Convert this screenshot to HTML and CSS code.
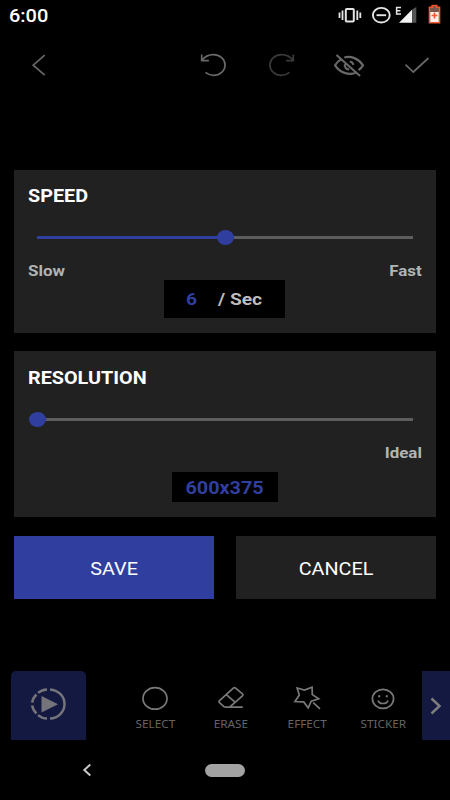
FILE: index.html
```html
<!DOCTYPE html>
<html lang="en">
<head>
<meta charset="utf-8">
<title>Export settings</title>
<link rel="stylesheet" href="styles.css">
</head>
<body>
<div class="screen">
  <header class="status">
    <span class="clock wide">6:00</span>
    <svg class="status-icons" width="110" height="32" viewBox="0 0 110 32" fill="none" stroke="#e4e4e4">
      <rect x="7.800" y="9" width="8" height="12.500" rx="1" stroke-width="2"/>
      <path d="M4.500 10.500v9.500M19.300 10.500v9.500" stroke-width="1.800"/>
      <path d="M1.500 12.500v5.500M22.300 12.500v5.500" stroke-width="1.800"/>
      <ellipse cx="43.300" cy="15.200" rx="8.400" ry="7.300" stroke-width="1.900"/>
      <path d="M38.500 15.200h9.600" stroke-width="1.900"/>
      <path d="M63 7.600h-4.400v6.300H63M58.600 10.800h3.800" stroke-width="1.500"/>
      <path d="M61 22.800 74.200 9.500v13.300z" fill="#f4f4f4" stroke="none"/>
      <path d="M74.200 9.500 78.300 7v15.800h-4.100z" fill="#555" stroke="none"/>
      <path d="M91.500 7.200h2.700V5.500h4.500v1.700h2.800v15.600h-10z" fill="#74584f" stroke="#f4572f" stroke-width="1.600"/>
      <path d="M92.300 12h8.400v10h-8.400z" fill="#fff0ea" stroke="none"/>
      <path d="M96.500 12.500v6M93.600 15.500h5.800" stroke="#f4572f" stroke-width="1.700"/>
    </svg>
  </header>

  <nav class="toolbar">
    <svg width="16" height="24" viewBox="0 0 16 24"><path d="M13.700 2.200 2.200 12.200l11.500 10"/></svg>
    <svg class="undo" width="30" height="28" viewBox="0 0 30 28"><path d="M2.700 3.500v6.200h7.200M2.900 9.500C5.500 5.700 9.500 3.600 14.300 3.600c6.600 0 11.800 4.700 11.800 10.400s-5.200 10.400-11.800 10.400c-3 0-5.600-1.200-7.800-3"/></svg>
    <svg class="redo" width="30" height="28" viewBox="0 0 30 28"><path d="M27.300 3.500v6.200h-7.200M27.100 9.500C24.500 5.700 20.500 3.600 15.700 3.600 9.100 3.600 3.900 8.300 3.900 14s5.200 10.400 11.800 10.400c3 0 5.600-1.200 7.800-3"/></svg>
    <svg class="eye" width="34" height="28" viewBox="0 0 34 28"><path d="M4.500 4 28 25M12.300 6.500c6.500-1.900 14.200 1 18.700 7.800-1.200 1.900-2.700 3.500-4.500 4.900M8.800 8.300c-2.300 1.500-4.200 3.500-5.700 6 5 7.600 13.500 10.200 20.400 7.400M17.800 10.500c1.900.3 3.300 1.600 3.500 3.300M12.900 13.300c-.7 2.900 1.400 5.100 4.300 5.200"/></svg>
    <svg class="check" width="28" height="22" viewBox="0 0 28 22"><path d="m2.500 10.700 7.800 7.300L25.500 4"/></svg>
  </nav>

  <main class="dialog">
    <section class="card speed">
      <h2><span class="wide">SPEED</span></h2>
      <div class="slider"><div class="fill half"></div><div class="knob"></div><div class="rest"></div></div>
      <div class="labels"><span class="wide">Slow</span><span class="wide right">Fast</span></div>
      <div class="value fps"><b class="wide">6</b><span class="wide unit">/ Sec</span></div>
    </section>
    <section class="card resolution">
      <h2><span class="wide">RESOLUTION</span></h2>
      <div class="slider"><div class="knob first"></div><div class="rest"></div></div>
      <div class="labels end"><span class="wide right">Ideal</span></div>
      <div class="value size"><b class="wide center">600x375</b></div>
    </section>
    <div class="actions">
      <button class="save"><span class="wide center">SAVE</span></button>
      <button><span class="wide center">CANCEL</span></button>
    </div>
  </main>

  <footer class="tools">
    <div class="play">
      <svg width="38" height="34" viewBox="0 0 38 34" fill="none" stroke="#74747a" stroke-width="2.500">
        <path d="M21 2.400c8.200.5 14.500 6.800 14.500 14.600S29.200 31.100 21 31.600"/>
        <path d="M18 2.400c-3.500.2-6.500 1.400-9 3.500M7.500 7.500C5 9.800 3.600 12.500 3.200 15.700M3.200 18.400c.4 3.200 1.800 5.900 4.300 8.100M9 28.100c2.500 2.100 5.500 3.300 9 3.500"/>
        <path d="M12.500 9v16.500L29 17.200z" fill="#74747a" stroke="none"/>
      </svg>
    </div>
    <div class="tool">
      <svg width="30" height="28" viewBox="0 0 30 28"><ellipse cx="15" cy="13.400" rx="12" ry="10.800"/></svg>
      <span class="wide center">SELECT</span>
    </div>
    <div class="tool">
      <svg width="30" height="28" viewBox="0 0 30 28"><path d="M8.500 22.200h18.300M8.500 22.200l-5-4.500c-.7-.6-.7-1.300 0-2L17.300 3.200c.8-.7 1.500-.7 2.300 0l6.800 5.700c.7.600.7 1.300 0 2L13.700 22.200M10.300 9.600l9 7.700"/></svg>
      <span class="wide center">ERASE</span>
    </div>
    <div class="tool">
      <svg width="30" height="28" viewBox="0 0 30 28"><path d="m5.100 3 7.400 2.100 7.600-2.900.2 7.400 6.400 4.100-7.500 2.500-3 6.600-4.500-5.900-8.700-.4L7.300 10zM21.200 17.700l6.800 6.100"/></svg>
      <span class="wide center">EFFECT</span>
    </div>
    <div class="tool">
      <svg width="30" height="28" viewBox="0 0 30 28"><ellipse cx="15" cy="13.800" rx="10.600" ry="9.500"/><path d="M10 15.500c1.200 4 8.800 4 10 0"/><path d="M10.200 11.300h2M17.800 11.300h2" stroke-width="2"/></svg>
      <span class="wide center">STICKER</span>
    </div>
    <div class="more"><svg width="14" height="20" viewBox="0 0 14 20" fill="none" stroke="#7d7d80" stroke-width="2.500"><path d="m2.500 2.500 8 7.500-8 7.500"/></svg></div>
  </footer>

  <div class="system">
    <svg width="12" height="16" viewBox="0 0 12 16" fill="none" stroke="#c8c8c8" stroke-width="2"><path d="m9.300 2.500-6 5.500 6 5.500"/></svg>
    <div class="pill"></div>
  </div>
</div>
</body>
</html>
```
FILE: styles.css
```css
* { box-sizing: border-box; }
body {
  margin: 0;
  background: #000;
  color: #fff;
  font-family: Roboto, "Liberation Sans", sans-serif;
}
.screen {
  width: 450px;
  height: 800px;
  display: flex;
  flex-direction: column;
  overflow: hidden;
}
.wide {
  display: inline-block;
  transform: scaleX(1.13);
  transform-origin: left center;
  white-space: nowrap;
}
.wide.right { transform-origin: right center; }
.wide.center { transform-origin: center; }

.status {
  height: 32px;
  display: flex;
  justify-content: space-between;
  padding-left: 8.5px;
}
.clock {
  font-size: 18px;
  font-weight: 500;
  line-height: 32px;
  transform: scale(1.11, 1.04);
}
.status-icons { margin-right: 2px; }

.toolbar {
  height: 66px;
  display: flex;
  align-items: center;
  padding: 0 19px 0 31px;
}
.toolbar svg { fill: none; stroke: #686868; stroke-width: 1.7; }
.toolbar .undo { margin-left: 151.5px; }
.toolbar .redo { margin-left: 37.5px; stroke: #393939; }
.toolbar .eye { margin-left: 35.5px; stroke-width: 2.2; }
.toolbar .check { margin-left: 37px; }

.dialog { padding: 72px 14px 0; }
.card {
  background: #212121;
  padding: 15px 14px 0;
  display: flex;
  flex-direction: column;
}
.speed { height: 162.5px; }
.resolution { height: 166px; margin-top: 18.5px; }
h2 {
  margin: 0;
  font-size: 17.500px;
  font-weight: 700;
  line-height: 22px;
}
.slider {
  height: 16px;
  margin: 23px 9px 0;
  display: flex;
  align-items: center;
}
.speed .slider { margin-top: 22.5px; }
.resolution h2 { margin-top: .5px; }
.resolution .slider { margin-top: 22.5px; }
.fill { height: 3px; background: #303f9f; }
.half { width: 180px; }
.knob {
  width: 17px;
  height: 15px;
  border-radius: 50%;
  background: #303f9f;
}
.first { margin-left: -8.500px; }
.rest { flex: 1; height: 3px; background: #5d5d5d; }
.labels {
  display: flex;
  justify-content: space-between;
  margin-top: 15px;
  font-size: 15px;
  font-weight: 700;
  line-height: 20px;
  color: #b3b3b3;
}
.end { justify-content: flex-end; margin-top: 16px; }
.value {
  align-self: center;
  background: #000;
  display: flex;
  align-items: center;
}
.value b { color: #303f9f; font-weight: 700; }
.fps {
  width: 121px;
  height: 37.5px;
  margin: -.5px 1px 0 0;
  padding: 1px 0 0 21.5px;
  font-size: 17px;
}
.unit { margin-left: 23px; font-weight: 700; color: #bdbdbd; }
.size {
  width: 106px;
  height: 30px;
  margin: 8.500px 1px 0 0;
  padding-top: 2.5px;
  justify-content: center;
  font-size: 17.500px;
}
.actions { display: flex; gap: 22px; margin-top: 19px; }
button {
  flex: 1;
  height: 63px;
  border: 0;
  padding: 3px 0 0;
  background: #212121;
  color: #fff;
  font: 400 17.500px Roboto, "Liberation Sans", sans-serif;
}
.save { background: #303f9f; }

.tools {
  height: 69px;
  margin-top: auto;
  display: flex;
  padding-left: 11px;
}
.play {
  width: 75px;
  margin-right: 31px;
  padding: 0 1px 4px 0;
  background: #131940;
  border-radius: 5px 5px 0 0;
  display: flex;
  align-items: center;
  justify-content: center;
}
.tool {
  width: 76px;
  padding-top: 14px;
  display: flex;
  flex-direction: column;
  align-items: center;
  font: 400 11.500px/14px "Noto Sans", sans-serif;
  color: #656565;
}
.tool svg { fill: none; stroke: #797979; stroke-width: 1.7; }
.tool span { margin-top: 4px; transform: scaleX(1.02); }
.more {
  width: 28px;
  margin-left: auto;
  background: #131940;
  display: flex;
  align-items: center;
  justify-content: center;
}
.system {
  height: 60px;
  display: flex;
  align-items: center;
  padding-left: 81px;
}
.pill {
  width: 40px;
  height: 13px;
  margin-left: 112px;
  border-radius: 7px;
  background: #a3a3a3;
}
```
